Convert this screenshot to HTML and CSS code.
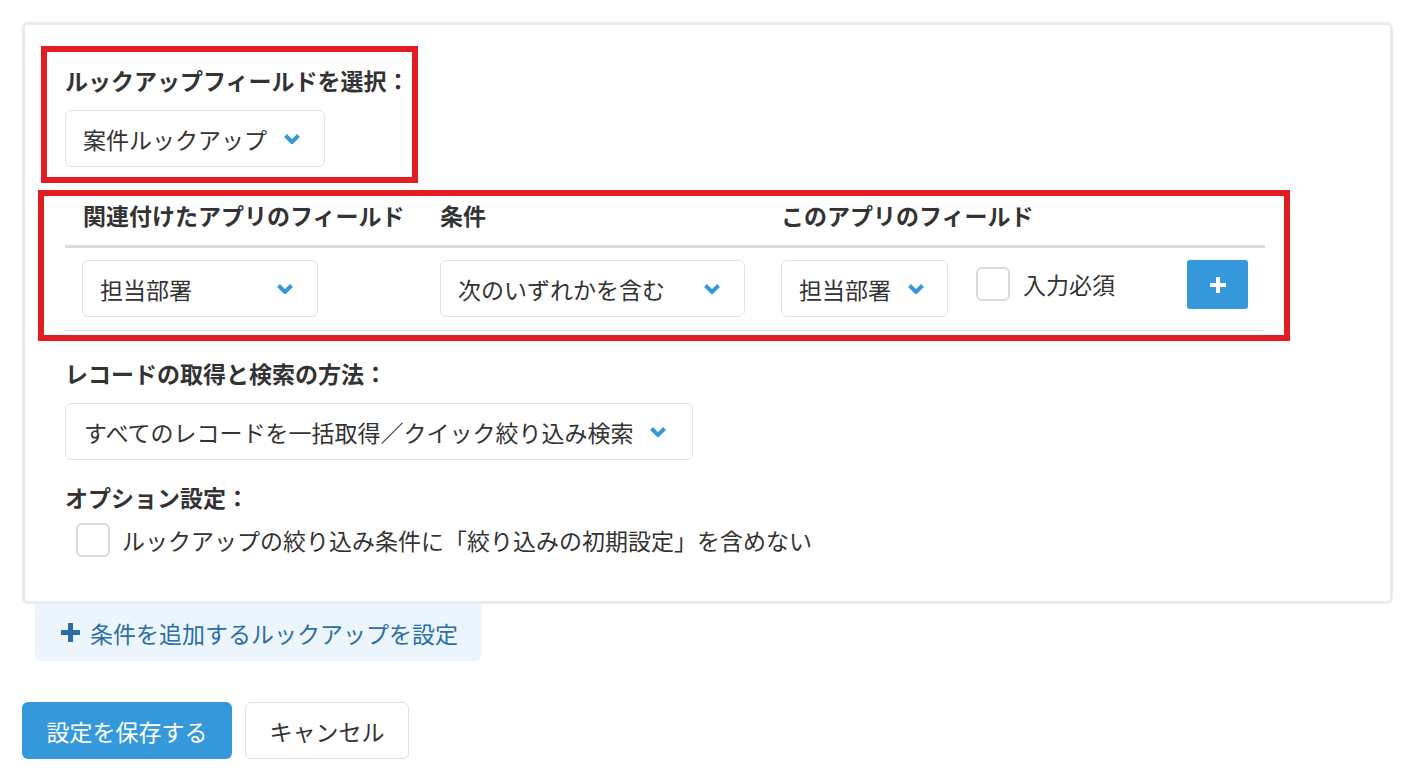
FILE: index.html
```html
<!DOCTYPE html>
<html lang="ja">
<head>
    <meta charset="UTF-8">
    <meta name="viewport" content="width=device-width, initial-scale=1.0">
    <title>ルックアップ設定</title>
    <link rel="stylesheet" href="styles.css">
</head>
<body>
    <div class="panel">
        <div class="mark mark-field">
            <div class="label">ルックアップフィールドを選択：</div>
            <div class="select">
                <span>案件ルックアップ</span>
                <svg class="chev" width="18" height="11" viewBox="0 0 18 11"><polyline points="2.5,2.5 9,9 15.5,2.5"/></svg>
            </div>
        </div>

        <div class="mark mark-table">
            <div class="grid grid-head">
                <div class="cell">関連付けたアプリのフィールド</div>
                <div class="cell">条件</div>
                <div class="cell">このアプリのフィールド</div>
                <div class="cell"></div>
                <div class="cell"></div>
            </div>
            <div class="grid grid-row">
                <div class="cell">
                    <div class="select w-src">
                        <span>担当部署</span>
                        <svg class="chev" width="18" height="11" viewBox="0 0 18 11"><polyline points="2.5,2.5 9,9 15.5,2.5"/></svg>
                    </div>
                </div>
                <div class="cell">
                    <div class="select w-cond">
                        <span>次のいずれかを含む</span>
                        <svg class="chev" width="18" height="11" viewBox="0 0 18 11"><polyline points="2.5,2.5 9,9 15.5,2.5"/></svg>
                    </div>
                </div>
                <div class="cell">
                    <div class="select w-dst">
                        <span>担当部署</span>
                        <svg class="chev" width="18" height="11" viewBox="0 0 18 11"><polyline points="2.5,2.5 9,9 15.5,2.5"/></svg>
                    </div>
                </div>
                <div class="cell">
                    <label class="check"><span class="box"></span>入力必須</label>
                </div>
                <div class="cell">
                    <button class="btn-plus">
                        <svg width="18" height="18" viewBox="0 0 18 18"><path d="M9 1v16M1 9h16"/></svg>
                    </button>
                </div>
            </div>
        </div>

        <div class="section">
            <div class="label">レコードの取得と検索の方法：</div>
            <div class="select">
                <span>すべてのレコードを一括取得／クイック絞り込み検索</span>
                <svg class="chev" width="18" height="11" viewBox="0 0 18 11"><polyline points="2.5,2.5 9,9 15.5,2.5"/></svg>
            </div>
            <div class="label label-opt">オプション設定：</div>
            <label class="check check-opt"><span class="box"></span>ルックアップの絞り込み条件に「絞り込みの初期設定」を含めない</label>
        </div>
    </div>

    <button class="btn-add">
        <svg width="19" height="19" viewBox="0 0 19 19"><path d="M9.5 0v19M0 9.5h19"/></svg>
        条件を追加するルックアップを設定
    </button>

    <div class="actions">
        <button class="btn btn-save">設定を保存する</button>
        <button class="btn btn-cancel">キャンセル</button>
    </div>
</body>
</html>
```

FILE: styles.css
```css
* {
    box-sizing: border-box;
}
body {
    margin: 0;
    padding: 22px 0 0 22px;
    font-family: "Noto Sans CJK JP", "Noto Sans", sans-serif;
    font-size: 23px;
    line-height: 32px;
    color: #333;
    background-color: #fff;
}
button {
    font-family: inherit;
    font-size: 23px;
    line-height: 32px;
    cursor: pointer;
    white-space: nowrap;
}

/* settings panel */
.panel {
    width: 1371px;
    border: 3px solid #ebebeb;
    border-radius: 6px;
    padding: 21px 0 44px;
}
.label {
    font-weight: bold;
    color: #333;
}

/* red highlight boxes */
.mark {
    border: 6px solid #e21d24;
}
.mark-field {
    width: 377px;
    margin-left: 16px;
    padding: 12px 0 10px 18px;
}
.mark-field .select {
    margin-top: 14px;
}
.mark-table {
    width: 1252px;
    margin: 7px 0 0 13px;
    padding: 0 19px 4px 21px;
}

/* dropdowns */
.select {
    display: inline-flex;
    align-items: center;
    justify-content: space-between;
    gap: 16px;
    height: 57px;
    padding: 0 23px 0 17px;
    border: 1px solid #e3e3e3;
    border-radius: 6px;
    background-color: #fff;
    white-space: nowrap;
}
.chev {
    flex: none;
}
.chev polyline {
    fill: none;
    stroke: #3498db;
    stroke-width: 4;
}
.w-src {
    width: 236px;
}
.w-cond {
    width: 305px;
}
.w-dst {
    width: 167px;
}

/* condition table */
.grid {
    display: grid;
    grid-template-columns: 358px 341px 195px 211px 95px;
}
.grid .cell {
    padding-left: 17px;
    white-space: nowrap;
}
.grid-head {
    padding: 3px 0 14px;
    border-bottom: 3px solid #dcdcdc;
    font-weight: bold;
}
.grid-head .cell:first-child {
    padding-left: 18px;
}
.grid-row {
    padding: 12px 0 13px;
    border-bottom: 1px solid #e1e1e1;
    align-items: start;
}
.grid-row .cell {
    display: flex;
    align-items: center;
}
.grid-row .cell:nth-child(4) {
    height: 57px;
    margin-top: -5px;
}

/* checkboxes */
.check {
    display: flex;
    align-items: center;
    gap: 13px;
}
.box {
    display: inline-block;
    width: 34px;
    height: 34px;
    border: 2px solid #dadada;
    border-radius: 6px;
    background-color: #fff;
}
.btn-plus {
    width: 61px;
    height: 49px;
    border: none;
    border-radius: 3px;
    background-color: #3498db;
    display: flex;
    align-items: center;
    justify-content: center;
}
.btn-plus path {
    stroke: #fff;
    stroke-width: 4;
}

/* lower section */
.section {
    margin: 16px 0 0 40px;
}
.section .select {
    margin-top: 14px;
    padding-left: 18px;
    padding-right: 25px;
}
.label-opt {
    margin-top: 21px;
}
.check-opt {
    margin: 10px 0 0 11px;
    gap: 12px;
}

/* add lookup button */
.btn-add {
    display: flex;
    align-items: center;
    gap: 10px;
    width: 446px;
    height: 57px;
    margin-left: 13px;
    padding: 0 0 0 26px;
    border: none;
    border-radius: 0 0 6px 6px;
    background-color: #edf5fc;
    color: #2b6ea6;
}
.btn-add path {
    stroke: #2b6ea6;
    stroke-width: 5;
}

/* save / cancel */
.actions {
    display: flex;
    gap: 13px;
    margin-top: 41px;
}
.btn {
    height: 57px;
    padding: 0;
    border-radius: 6px;
    text-align: center;
}
.btn-save {
    width: 210px;
    border: none;
    background-color: #3498db;
    color: #fff;
}
.btn-cancel {
    width: 164px;
    border: 1px solid #e0e0e0;
    background-color: #fff;
    color: #333;
}
```
